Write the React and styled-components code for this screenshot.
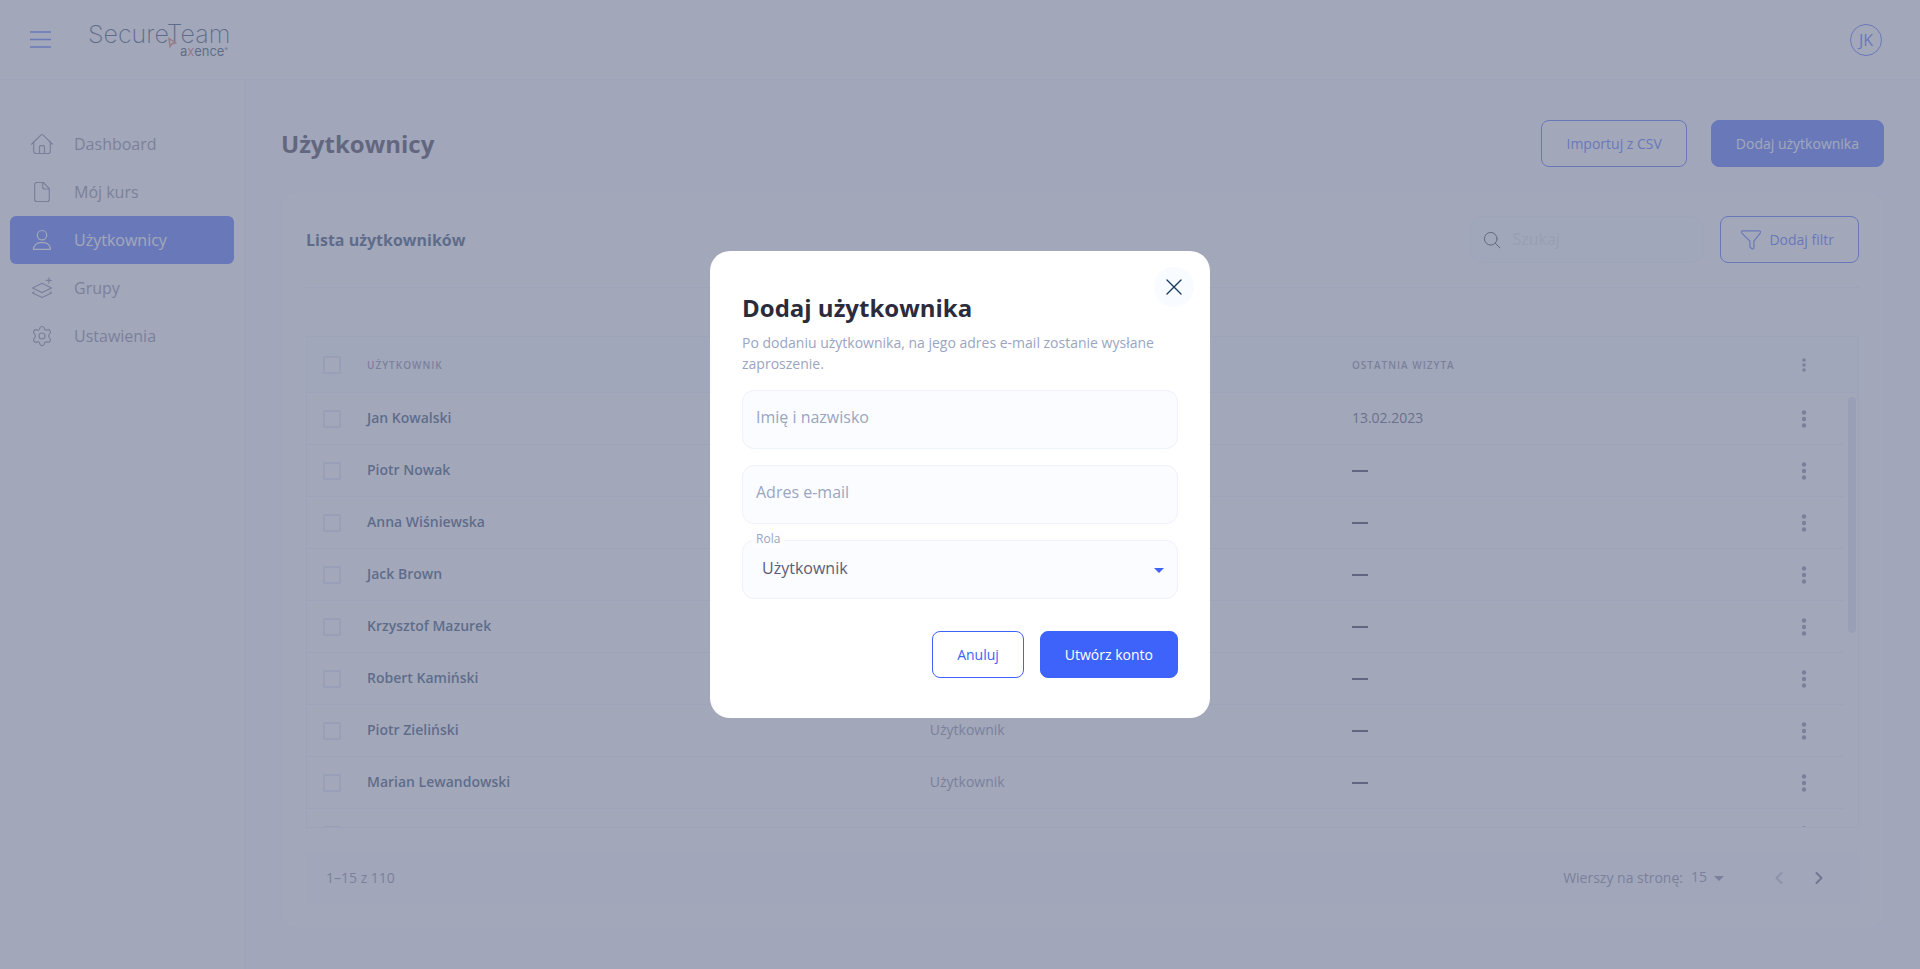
import { useEffect, useRef, useState } from "react";
import styled, { createGlobalStyle } from "styled-components";

const GlobalStyle = createGlobalStyle`
    *{
        box-sizing: border-box;
    }
    body{
        margin: 0;
        background: #fafbff;
        color: #2b2b3b;
        font-family: "Open Sans", "Noto Sans", sans-serif;
        font-size: 14px;
    }
    button, input, select{
        font-family: inherit;
    }
    h1, h2, p, ul{
        margin: 0;
        padding: 0;
    }
`;
const Page = styled.div`
    display: flex;
    flex-direction: column;
    height: 100vh;
    min-height: 720px;
`;
const Header = styled.header`
    display: flex;
    align-items: center;
    height: 80px;
    padding: 0 38px 0 20px;
    background: #fff;
    border-bottom: 1px solid #edf0fa;
`;
const MenuBtn = styled.button`
    display: flex;
    align-items: center;
    justify-content: center;
    width: 40px;
    height: 40px;
    padding: 0;
    border: 0;
    background: none;
    color: #3d63fb;
    cursor: pointer;
`;
const LogoLink = styled.a`
    display: flex;
    margin-left: 28px;
    color: #173a5e;
`;
const Avatar = styled.button`
    width: 32px;
    height: 32px;
    margin-left: auto;
    padding: 0;
    border: 1px solid #3d63fb;
    border-radius: 50%;
    background: #fff;
    color: #3d63fb;
    font-size: 16px;
    line-height: 28px;
    cursor: pointer;
`;
const Body = styled.div`
    display: flex;
    flex: 1;
    min-height: 0;
`;
const Sidebar = styled.nav`
    flex: none;
    width: 245px;
    padding: 40px 10px;
    background: #fff;
    border-right: 1px solid #edf0fa;
    ul{
        list-style: none;
    }
`;
const NavLink = styled.a`
    display: flex;
    align-items: center;
    gap: 20px;
    height: 48px;
    padding: 0 20px;
    border-radius: 6px;
    color: #7a7e96;
    font-size: 16px;
    text-decoration: none;
    &.active{
        background: #3d63fb;
        color: #fff;
    }
`;
const Main = styled.main`
    display: flex;
    flex: 1;
    flex-direction: column;
    min-width: 0;
    padding: 40px 36px;
`;
const TitleRow = styled.div`
    display: flex;
    align-items: center;
    gap: 24px;
    margin-bottom: 24px;
    h1{
        flex: 1;
        font-size: 24px;
        line-height: 32px;
    }
`;
const Btn = styled.button`
    display: flex;
    align-items: center;
    justify-content: center;
    gap: 8px;
    height: 47px;
    padding: 0 24px;
    border: 1px solid #3d63fb;
    border-radius: 8px;
    background: ${({ $primary }) => ($primary ? "#3d63fb" : "#fff")};
    color: ${({ $primary }) => ($primary ? "#fff" : "#3d63fb")};
    font-size: 14px;
    font-weight: ${({ $primary }) => ($primary ? 500 : 400)};
    cursor: pointer;
    svg{
        margin-left: -4px;
    }
`;
const Card = styled.section`
    display: flex;
    flex: 1;
    flex-direction: column;
    min-height: 0;
    padding: 24px;
    border: 1px solid #f6f8ff;
    border-radius: 16px;
    background: #fff;
`;
const CardTop = styled.div`
    display: flex;
    align-items: center;
    gap: 16px;
    padding-bottom: 24px;
    border-bottom: 1px solid #edf0fa;
    h2{
        flex: 1;
        color: #173a5e;
        font-size: 16px;
        font-weight: 700;
    }
`;
const Search = styled.label`
    display: flex;
    align-items: center;
    gap: 10px;
    width: 234px;
    height: 47px;
    padding: 0 11px;
    border: 1px solid #f2f5fe;
    border-radius: 12px;
    background: #fcfdff;
    input{
        flex: 1;
        min-width: 0;
        padding: 0 0 2px;
        border: 0;
        outline: 0;
        background: none;
        font-size: 16px;
    }
    input::placeholder{
        color: #dcdfec;
    }
`;
const TableWrap = styled.div`
    position: relative;
    display: flex;
    flex: 1;
    flex-direction: column;
    min-height: 0;
    margin-top: 48px;
    border: 1px solid #edf0fa;
`;
const Thumb = styled.div`
    position: absolute;
    right: 2px;
    width: 8px;
    border-radius: 4px;
    background: #e2e4f4;
    pointer-events: none;
`;
const Table = styled.table`
    display: flex;
    flex: 1;
    flex-direction: column;
    min-height: 0;
    tr{
        display: grid;
        grid-template-columns: 60px 4fr 3fr 3fr 70px;
        align-items: center;
        border-bottom: 1px solid #edf0fa;
    }
    th, td{
        display: flex;
        align-items: center;
        padding: 0;
        text-align: left;
    }
    th:first-child, td:first-child{
        padding: 0 0 0 16px;
    }
    th:last-child, td:last-child{
        justify-content: center;
        padding: 0 10px 0 0;
    }
`;
const Thead = styled.thead`
    display: block;
    background: #fcfdff;
    tr{
        height: 56px;
        padding-right: 14px;
    }
    th{
        color: #7a7e96;
        font-size: 10px;
        font-weight: 600;
        letter-spacing: 1px;
        text-transform: uppercase;
    }
`;
const Tbody = styled.tbody`
    display: block;
    flex: 1 1 0;
    min-height: 0;
    padding-right: 14px;
    overflow-y: scroll;
    scrollbar-width: none;
    tr{
        height: 52px;
    }
    td{
        padding-bottom: 2px;
        color: #7a7e96;
    }
`;
const Name = styled.span`
    color: #173a5e;
    font-weight: 600;
`;
const DateText = styled.span`
    color: #3b4a6c;
`;
const Dash = styled.span`
    width: 16px;
    height: 2px;
    margin-top: 2px;
    background: #2b2b3b;
`;
const Checkbox = styled.input`
    width: 18px;
    height: 18px;
    margin: 0;
    appearance: none;
    border: 2px solid #e2e3f6;
    border-radius: 2px;
    background: #fff;
    &:checked{
        background: #3d63fb;
    }
`;
const IconBtn = styled.button`
    display: flex;
    align-items: center;
    justify-content: center;
    width: 40px;
    height: 40px;
    padding: 0;
    border: 0;
    background: none;
    color: ${({ $color }) => $color || "#7a7e96"};
    cursor: pointer;
`;
const Pagination = styled.div`
    display: flex;
    align-items: center;
    height: 52px;
    margin-top: 24px;
    padding: 0 20px;
    background: #fafbff;
    color: #7a7e96;
    > p{
        flex: 1;
    }
    > p, label{
        padding-bottom: 2px;
    }
    label{
        margin-right: 8px;
    }
`;
const PerPage = styled.div`
    display: flex;
    align-items: center;
    margin-right: 35px;
    select{
        width: 33px;
        margin-right: -10px;
        padding: 0 0 4px;
        border: 0;
        appearance: none;
        background: none;
        color: inherit;
        font-size: 14px;
    }
    svg{
        pointer-events: none;
    }
`;
const Overlay = styled.div`
    position: fixed;
    inset: 0;
    display: flex;
    align-items: center;
    justify-content: center;
    background: rgba(122, 129, 156, 0.7);
`;
const Modal = styled.div`
    position: relative;
    width: 500px;
    max-width: 100%;
    padding: 40px 32px;
    border-radius: 20px;
    background: #fff;
    h2{
        font-size: 24px;
        line-height: 34px;
    }
    p{
        margin: 7px 0 16px;
        color: #9aa5bf;
        line-height: 21px;
    }
`;
const CloseBtn = styled.button`
    position: absolute;
    top: 16px;
    right: 16px;
    display: flex;
    align-items: center;
    justify-content: center;
    width: 40px;
    height: 40px;
    padding: 0;
    border: 0;
    border-radius: 50%;
    background: #f8fbff;
    color: #173a5e;
    cursor: pointer;
`;
const Form = styled.form`
    display: flex;
    flex-direction: column;
    gap: 16px;
`;
const Field = styled.div`
    position: relative;
    display: flex;
    input, select{
        width: 100%;
        height: 59px;
        padding: 0 13px 6px;
        border: 1px solid #edf2fb;
        border-radius: 12px;
        outline: 0;
        background: #fbfcff;
        color: #5a5e76;
        font-size: 16px;
    }
    input::placeholder{
        color: #9aa5bf;
        opacity: 1;
    }
    select{
        padding: 0 19px 3px;
        appearance: none;
    }
    label{
        position: absolute;
        top: -9px;
        left: 10px;
        padding: 0 4px;
        background: #fdfdff;
        color: #9aa5bf;
        font-size: 12px;
        line-height: 16px;
    }
    svg{
        position: absolute;
        top: 28px;
        right: 14px;
        color: #3d63fb;
        pointer-events: none;
    }
`;
const Actions = styled.div`
    display: flex;
    justify-content: flex-end;
    gap: 16px;
    margin-top: 16px;
`;

const Line = ({ size = 24, width = 1.2, children, ...rest }) => (
    <svg
        width={size}
        height={size}
        viewBox="0 0 24 24"
        fill="none"
        stroke="currentColor"
        strokeWidth={width}
        strokeLinecap="round"
        strokeLinejoin="round"
        aria-hidden="true"
        {...rest}
    >
        {children}
    </svg>
);
const HomeIcon = () => (
    <Line>
        <path d="M1.5 12.2 11.1 2.9a1.2 1.2 0 0 1 1.8 0l9.6 9.3" />
        <path d="M3.7 10.2v9.1c0 1.2.9 2.2 2.2 2.2h12.2c1.3 0 2.2-1 2.2-2.2v-9.1" />
        <path d="M9.5 21.5v-6.8c0-.6.4-1 1-1h3c.6 0 1 .4 1 1v6.8" />
    </Line>
);
const FileIcon = () => (
    <Line>
        <path d="M13.4 2.5H6.7a2 2 0 0 0-2 2v15a2 2 0 0 0 2 2h10.6a2 2 0 0 0 2-2V8.6z" />
        <path d="M12.7 2.5V7a2 2 0 0 0 2 2h4.6" />
    </Line>
);
const UserIcon = () => (
    <Line>
        <circle cx="12" cy="7.2" r="4.7" />
        <path d="M3.5 21.4c0-3.7 3.1-6.7 6.8-6.7h3.4c3.7 0 6.8 3 6.8 6.7z" />
    </Line>
);
const GroupsIcon = () => (
    <Line>
        <path d="m12 7.3 9.5 4.7-9.5 4.6L2.5 12z" />
        <path d="M3.9 16.1 2.5 17l9.5 4.5 9.5-4.5-1.4-.9" />
        <path d="M18.9 1.9v5M16.4 4.4h5" />
    </Line>
);
const CogIcon = () => (
    <Line>
        <circle cx="12" cy="12" r="3" />
        <path d="M10 3.6c.5-1.5 3.5-1.5 4 0l.4 1.3c.3 1 1.3 1.5 2.3 1.2l1.4-.4c1.6-.3 3.1 2.2 2 3.5l-1 1.3c-.6.9-.6 2.1 0 3l1 1.3c1.1 1.3-.4 3.8-2 3.5l-1.4-.4c-1-.3-2 .2-2.3 1.2l-.4 1.3c-.5 1.5-3.5 1.5-4 0l-.4-1.3c-.3-1-1.3-1.500-2.300-1.200l-1.400.4c-1.600.3-3.100-2.200-2-3.500l1-1.300c.6-.9.6-2.100 0-3l-1-1.300c-1.100-1.300.4-3.800 2-3.500l1.400.4c1 .3 2-.2 2.300-1.200z" />
    </Line>
);
const SearchIcon = () => (
    <Line size={20} color="#2b2b3b">
        <circle cx="10.5" cy="10.5" r="7.6" />
        <path d="m16.2 16.2 5.3 5.3" />
    </Line>
);
const FilterIcon = () => (
    <Line size={20} viewBox="2 2 20 20">
        <path d="M3.6 2.9h16.800c1.100 0 1.600 1.200 1 2l-6.500 8.200v6.300c0 1.300-.9 1.900-1.900 1.400l-1.400-1c-.5-.3-.7-.7-.7-1.300v-5.400L2.600 4.900c-.6-.8-.1-2 1-2z" />
    </Line>
);
const Caret = () => (
    <svg width="10" height="5" viewBox="0 0 10 5" fill="currentColor" aria-hidden="true">
        <path d="M0 0h10L5 5z" />
    </svg>
);
const Dots = ({ gap, r }) => (
    <svg width="6" height="20" viewBox="0 0 6 20" fill="currentColor" aria-hidden="true">
        <circle cx="3" cy={10 - gap} r={r} />
        <circle cx="3" cy="10" r={r} />
        <circle cx="3" cy={10 + gap} r={r} />
    </svg>
);
const Logo = () => (
    <svg width="144" height="38" viewBox="0 0 144 38" fontFamily="Inter, sans-serif" fill="currentColor">
        <text x="0" y="22" fontSize="25" fontWeight="200">SecureTeam</text>
        <text x="92" y="35" fontSize="13">
            a<tspan fill="#e0694a">x</tspan>ence<tspan fontSize="5" dy="-5">®</tspan>
        </text>
        <path d="m81 17.5 6.5 4.5-3.5.7-2 3z" fill="none" stroke="#e0694a" strokeWidth="1.4" />
    </svg>
);

const navItems = [
    { text: "Dashboard", icon: <HomeIcon /> },
    { text: "Mój kurs", icon: <FileIcon /> },
    { text: "Użytkownicy", icon: <UserIcon />, active: true },
    { text: "Grupy", icon: <GroupsIcon /> },
    { text: "Ustawienia", icon: <CogIcon /> },
];
const names = [
    "Jan Kowalski",
    "Piotr Nowak",
    "Anna Wiśniewska",
    "Jack Brown",
    "Krzysztof Mazurek",
    "Robert Kamiński",
    "Piotr Zieliński",
    "Marian Lewandowski",
    "Adam Wójcik",
    "Ewa Kowalczyk",
    "Tomasz Lis",
    "Maria Dąbrowska",
    "Paweł Szymański",
    "Karol Woźniak",
    "Zofia Kaczmarek",
];
const users = names.map((name, i) => ({
    id: i + 1,
    name,
    role: "Użytkownik",
    lastVisit: i === 0 ? "13.02.2023" : null,
}));

function UsersTable(){
    const bodyRef = useRef(null);
    const [thumb, setThumb] = useState({ top: 0, height: 0 });

    const updateThumb = () => {
        const el = bodyRef.current;
        const ratio = el.clientHeight / el.scrollHeight;
        setThumb({
            top: Math.round(el.offsetTop + el.scrollTop * ratio) + 4,
            height: Math.round(el.clientHeight * ratio) - 5,
        });
    }
    useEffect(() => {
        updateThumb();
        window.addEventListener("resize", updateThumb);
        return () => window.removeEventListener("resize", updateThumb);
    }, []);

    return(
        <TableWrap>
            <Table>
                <Thead>
                    <tr>
                        <th><Checkbox type="checkbox" aria-label="Zaznacz wszystkich" /></th>
                        <th>Użytkownik</th>
                        <th>Rola</th>
                        <th>Ostatnia wizyta</th>
                        <th><IconBtn aria-label="Opcje"><Dots gap={5} r={1.8} /></IconBtn></th>
                    </tr>
                </Thead>
                <Tbody ref={bodyRef} onScroll={updateThumb}>
                    {users.map(user => (
                        <tr key={user.id}>
                            <td><Checkbox type="checkbox" aria-label={user.name} /></td>
                            <td><Name>{user.name}</Name></td>
                            <td>{user.role}</td>
                            <td>{user.lastVisit ? <DateText>{user.lastVisit}</DateText> : <Dash />}</td>
                            <td><IconBtn aria-label="Opcje"><Dots gap={6.5} r={2.2} /></IconBtn></td>
                        </tr>
                    ))}
                </Tbody>
            </Table>
            <Thumb style={thumb} />
        </TableWrap>
    )
}

function AddUserModal({ onClose }){
    const [role, setRole] = useState("Użytkownik");
    return(
        <Overlay>
            <Modal role="dialog" aria-modal="true" aria-labelledby="modal-title">
                <CloseBtn onClick={onClose} aria-label="Zamknij">
                    <Line size={16} width={2}><path d="m1.5 1.5 21 21M22.5 1.5l-21 21" /></Line>
                </CloseBtn>
                <h2 id="modal-title">Dodaj użytkownika</h2>
                <p>Po dodaniu użytkownika, na jego adres e-mail zostanie wysłane zaproszenie.</p>
                <Form onSubmit={e => e.preventDefault()}>
                    <Field><input type="text" placeholder="Imię i nazwisko" aria-label="Imię i nazwisko" /></Field>
                    <Field><input type="email" placeholder="Adres e-mail" aria-label="Adres e-mail" /></Field>
                    <Field>
                        <select id="role" value={role} onChange={e => setRole(e.target.value)}>
                            <option>Użytkownik</option>
                            <option>Administrator</option>
                        </select>
                        <label htmlFor="role">Rola</label>
                        <Caret />
                    </Field>
                    <Actions>
                        <Btn type="button" onClick={onClose}>Anuluj</Btn>
                        <Btn type="submit" $primary>Utwórz konto</Btn>
                    </Actions>
                </Form>
            </Modal>
        </Overlay>
    )
}

export default function App(){
    const [open, setOpen] = useState(true);
    return(
        <>
            <GlobalStyle />
            <Page>
                <Header>
                    <MenuBtn aria-label="Menu">
                        <svg width="21" height="17" viewBox="0 0 21 17" stroke="currentColor" strokeWidth="1.5">
                            <path d="M0 1h21M0 8.5h21M0 16h21" />
                        </svg>
                    </MenuBtn>
                    <LogoLink href="#" aria-label="SecureTeam"><Logo /></LogoLink>
                    <Avatar>JK</Avatar>
                </Header>
                <Body>
                    <Sidebar>
                        <ul>
                            {navItems.map(item => (
                                <li key={item.text}>
                                    <NavLink href="#" className={item.active && "active"}>
                                        {item.icon}
                                        {item.text}
                                    </NavLink>
                                </li>
                            ))}
                        </ul>
                    </Sidebar>
                    <Main>
                        <TitleRow>
                            <h1>Użytkownicy</h1>
                            <Btn>Importuj z CSV</Btn>
                            <Btn $primary onClick={() => setOpen(true)}>Dodaj użytkownika</Btn>
                        </TitleRow>
                        <Card>
                            <CardTop>
                                <h2>Lista użytkowników</h2>
                                <Search>
                                    <SearchIcon />
                                    <input type="search" placeholder="Szukaj" aria-label="Szukaj" />
                                </Search>
                                <Btn><FilterIcon />Dodaj filtr</Btn>
                            </CardTop>
                            <UsersTable />
                            <Pagination>
                                <p>1–15 z 110</p>
                                <label htmlFor="per-page">Wierszy na stronę:</label>
                                <PerPage>
                                    <select id="per-page" defaultValue="15">
                                        <option>15</option>
                                        <option>30</option>
                                    </select>
                                    <Caret />
                                </PerPage>
                                <IconBtn aria-label="Poprzednia strona" $color="#b9bdcd">
                                    <Line width={2}><path d="m14.5 7-5 5 5 5" /></Line>
                                </IconBtn>
                                <IconBtn aria-label="Następna strona" $color="#5a5e76">
                                    <Line width={2}><path d="m9.5 7 5 5-5 5" /></Line>
                                </IconBtn>
                            </Pagination>
                        </Card>
                    </Main>
                </Body>
            </Page>
            {open && <AddUserModal onClose={() => setOpen(false)} />}
        </>
    )
}
